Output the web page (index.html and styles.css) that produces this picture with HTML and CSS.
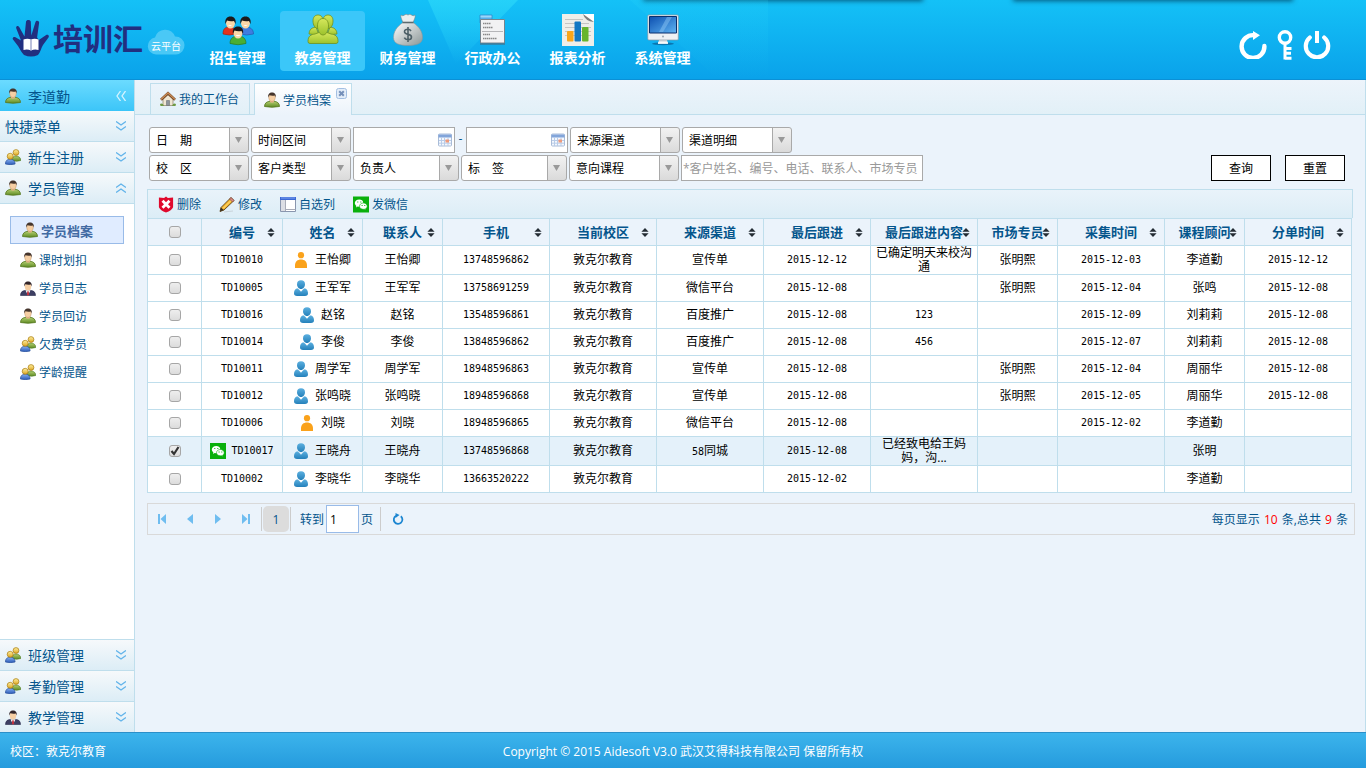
FILE: index.html
```html
<!DOCTYPE html>
<html lang="zh-CN">
<head>
    <meta charset="UTF-8">
    <title>培训汇云平台</title>
    <link rel="stylesheet" href="styles.css">
</head>
<body>
    <!-- 图标 -->
    <svg class="sprite" aria-hidden="true">
        <defs>
            <linearGradient id="gGreen" x1="0" y1="0" x2="0" y2="1"><stop offset="0" stop-color="#b5cf72"/><stop offset="1" stop-color="#5d8a22"/></linearGradient>
            <linearGradient id="gLime" x1="0" y1="0" x2="0" y2="1"><stop offset="0" stop-color="#d6e85c"/><stop offset="1" stop-color="#9cc22c"/></linearGradient>
            <linearGradient id="gGold" x1="0" y1="0" x2="0" y2="1"><stop offset="0" stop-color="#fff0a0"/><stop offset="1" stop-color="#dca520"/></linearGradient>
            <linearGradient id="gBlue" x1="0" y1="0" x2="0" y2="1"><stop offset="0" stop-color="#86b0f0"/><stop offset="1" stop-color="#2c5cb8"/></linearGradient>
            <linearGradient id="gPerson" x1="0" y1="0" x2="0" y2="1"><stop offset="0" stop-color="#5cb0e0"/><stop offset="1" stop-color="#2480ba"/></linearGradient>
            <linearGradient id="gBag" x1="0" y1="0" x2="1" y2="1"><stop offset="0" stop-color="#ffffff"/><stop offset="1" stop-color="#8b9696"/></linearGradient>
            <linearGradient id="gScreen" x1="0" y1="0" x2="1" y2="1"><stop offset="0" stop-color="#0d4fb0"/><stop offset="1" stop-color="#5fb4f2"/></linearGradient>
            <linearGradient id="gRay" x1="0" y1="0" x2="0" y2="1"><stop offset="0" stop-color="#30dcfa" stop-opacity=".6"/><stop offset="1" stop-color="#30dcfa" stop-opacity="0"/></linearGradient>
        </defs>
        <symbol id="i-user" viewBox="0 0 16 16">
            <path d="M.5 14.500C.5 11 3 9.500 6 9.300h4c3 .2 5.500 1.700 5.500 5.200q-7.500 1.500-15 0z" fill="url(#gGreen)" stroke="#56771f" stroke-width=".8"/>
            <path d="M6 8h4v2q-2 1.500-4 0z" fill="#e2b184"/>
            <ellipse cx="8" cy="5.500" rx="3.300" ry="4" fill="#f6cfa4" stroke="#b98a5c" stroke-width=".4"/>
            <path d="M4.200 5.500C3.800 2 5.500.5 8 .5s4.300 1.500 3.800 5l-.9-2q-2.900.6-5.600-.2z" fill="#45352c"/>
        </symbol>
        <symbol id="i-suit" viewBox="0 0 16 16">
            <path d="M.5 15.500c0-3.500 2-5 5.500-5.200h4c3.500.2 5.500 1.700 5.500 5.200z" fill="#3d3f63" stroke="#26284a" stroke-width=".6"/>
            <path d="M5.500 10.300h5L8 15.500z" fill="#fff"/>
            <path d="M7.300 11.300h1.400l.5 4H6.800z" fill="#c0303c"/>
            <ellipse cx="8" cy="6.500" rx="3.200" ry="3.900" fill="#f6cfa4"/>
            <path d="M4.300 6.500C3.900 3 5.500 1.500 8 1.500s4.200 1.500 3.700 5l-.9-2q-2.900.6-5.500-.2z" fill="#33262a"/>
        </symbol>
        <symbol id="i-group" viewBox="0 0 16 16">
            <path d="M7 11.500c0-3 1.500-4.500 4-4.500s4.800 1.500 4.800 4.500q-4 1.500-8.800 0z" fill="url(#gGreen)" stroke="#4c7a24" stroke-width=".6"/>
            <circle cx="11" cy="3.500" r="2.900" fill="url(#gGold)" stroke="#a87a10" stroke-width=".7"/>
            <path d="M.4 15c0-3.300 1.800-4.800 4.800-4.800s4.900 1.500 4.900 4.800q-4.800 1.300-9.700 0z" fill="url(#gBlue)" stroke="#28509c" stroke-width=".7"/>
            <circle cx="5.200" cy="7.300" r="3" fill="url(#gGold)" stroke="#a87a10" stroke-width=".7"/>
        </symbol>
        <symbol id="i-down" viewBox="0 0 10 10">
            <path d="M0 .5l5 3.500 5-3.500M0 5.500L5 9l5-3.500" fill="none" stroke="#63b4ea" stroke-width="1.400"/>
        </symbol>
        <symbol id="i-up" viewBox="0 0 10 10">
            <path d="M0 4.500L5 1l5 3.500M0 9.500L5 6l5 3.500" fill="none" stroke="#63b4ea" stroke-width="1.400"/>
        </symbol>
        <symbol id="i-left" viewBox="0 0 10 10">
            <path d="M4.500 0L1 5l3.500 5M9.500 0L6 5l3.500 5" fill="none" stroke="#d4f3ff" stroke-width="1.300"/>
        </symbol>
        <symbol id="i-home" viewBox="0 0 16 16">
            <path d="M3 8v6.500h10V8L8 3.500z" fill="#efe6d2" stroke="#8d7c62" stroke-width=".7"/>
            <path d="M6.500 9.500h3v5h-3z" fill="#8e949c" stroke="#5d646c" stroke-width=".5"/>
            <path d="M1 8.800L8 2.300l7 6.500" fill="none" stroke="#6d4021" stroke-width="2.600"/>
            <path d="M1 8.500L8 2l7 6.500" fill="none" stroke="#c98b55" stroke-width="1.300"/>
            <path d="M0 13q2.500-1.500 4 2H.5zM16 13q-2.500-1.500-4 2h3.500z" fill="#6e9a44"/>
        </symbol>
        <symbol id="i-close" viewBox="0 0 11 11">
            <rect x=".5" y=".5" width="10" height="10" rx="2" fill="#e3edf9" stroke="#a3bfe2"/>
            <path d="M3.200 3.200l4.600 4.600M7.800 3.200L3.200 7.800" stroke="#7590ba" stroke-width="2"/>
        </symbol>
        <symbol id="i-calendar" viewBox="0 0 14 14">
            <rect x=".5" y="1" width="13" height="12" rx="1" fill="#f4f8fe" stroke="#a9bcd8"/>
            <path d="M.5 1.500h13v3H.5z" fill="#82a5da"/>
            <path d="M3.500 4.500V13M6.500 4.500V13M10 4.500V13M1 7.500h12M1 10.200h12" stroke="#b9cce8"/>
            <path d="M7.500 6.500h3.500v3H7.500z" fill="#ee9a7c"/>
        </symbol>
        <symbol id="i-delete" viewBox="0 0 16 18">
            <path d="M8 .5L10 2l5.500-.3V12Q14 15.500 8 17.500 2 15.500.5 12V1.700L6 2z" fill="#e0092c"/>
            <path d="M4.300 5l7.400 7.500M11.700 5l-7.400 7.500" stroke="#fff" stroke-width="3"/>
        </symbol>
        <symbol id="i-edit" viewBox="0 0 16 16">
            <path d="M5 15.500l9-1" stroke="#c9d3da"/>
            <path d="M1 15l1-4L12 1l3 3L5 13.500z" fill="#f5b52c" stroke="#5a4018" stroke-width=".9"/>
            <path d="M4 12L13.500 2.500" stroke="#ffe48a" stroke-width="1"/>
            <path d="M1 15l1-4 2.800 2.500z" fill="#3b3226"/>
            <path d="M12 1l3 3-1.500 1.500-3-3z" fill="#df8a86" stroke="#6b3c3c" stroke-width=".6"/>
        </symbol>
        <symbol id="i-columns" viewBox="0 0 16 15">
            <path d="M.5.5h15v14H.5z" fill="#fff" stroke="#8996ae"/>
            <path d="M0 0h16v3H0z" fill="#3c69d6"/>
            <path d="M1 1h14" stroke="#8fb1f5" stroke-width=".8"/>
            <path d="M1 3h4.500v11H1z" fill="#dcdee4"/>
            <path d="M5.500 3v11M5.500 12.500h10" stroke="#a8acb8"/>
        </symbol>
        <symbol id="i-wechat" viewBox="0 0 16 16">
            <path d="M0 0h16v16H0z" fill="#09b00c"/>
            <path d="M6.200 3C3.700 3 1.800 4.600 1.800 6.600c0 1.200.6 2.100 1.600 2.800L3 10.900l1.700-.9q3 .6 4.800-1.200 1.500-3-.2-4.700Q8 3 6.200 3z" fill="#fff"/>
            <path d="M10.400 6.500c-2.200 0-3.900 1.400-3.900 3.200s1.700 3.100 3.900 3.100l1.200-.1 1.400.8-.4-1.300c.9-.6 1.600-1.500 1.600-2.500 0-1.800-1.700-3.200-3.800-3.200z" fill="#fff" stroke="#09b00c" stroke-width=".6"/>
            <path d="M4.300 5.500h1M7.300 5.500h1M8.600 9h1M11.300 9h1" stroke="#09b00c"/>
        </symbol>
        <symbol id="i-woman" viewBox="0 0 14 16">
            <circle cx="7" cy="3.200" r="3.100" fill="#faa21b"/>
            <path d="M1 16v-2.500C1 9.500 3.500 7.500 7 7.500s6 2 6 6V16z" fill="#faa21b"/>
        </symbol>
        <symbol id="i-man" viewBox="0 0 14 16">
            <path d="M7 .3c2.600 0 4 1.600 4 3.900S9.400 9 7 9 3 6.500 3 4.200 4.400.3 7 .3z" fill="url(#gPerson)"/>
            <path d="M3.300 8.300L5 9.500l2 2.200 2-2.200 1.700-1.200c2.500.7 3.300 2.700 3.300 5.200 0 1.600-1 2.500-3 2.500H3c-2 0-3-.9-3-2.500 0-2.500.8-4.500 3.300-5.200z" fill="url(#gPerson)"/>
        </symbol>
        <symbol id="i-sort" viewBox="0 0 8 10">
            <path d="M4 0l4 4.300H0zM4 10L0 5.700h8z" fill="#232b33"/>
        </symbol>
        <symbol id="p-first" viewBox="0 0 10 10"><path d="M1 0h2v10H1zM9 0v10L3.500 5z" fill="#6fbdf0"/></symbol>
        <symbol id="p-prev" viewBox="0 0 10 10"><path d="M8 0v10L2 5z" fill="#6fbdf0"/></symbol>
        <symbol id="p-next" viewBox="0 0 10 10"><path d="M2 0v10l6-5z" fill="#6fbdf0"/></symbol>
        <symbol id="p-last" viewBox="0 0 10 10"><path d="M7 0h2v10H7zM1 0v10l5.500-5z" fill="#6fbdf0"/></symbol>
        <symbol id="p-reload" viewBox="0 0 12 12">
            <path d="M8.800 3.200A4.300 4.300 0 1 1 4 2.800" fill="none" stroke="#1c86d1" stroke-width="1.800"/>
            <path d="M3.500 0v5L7.500 2z" fill="#1c86d1"/>
        </symbol>
    </svg>

    <header class="top">
        <svg class="rays" width="340" height="79" aria-hidden="true">
            <path d="M0 0h90L28 64z" fill="url(#gRay)"/>
            <path d="M202 0h138v79h-50z" fill="url(#gRay)" opacity=".25"/>
        </svg>
        <a class="logo" href="#">
            <svg class="logo-hand" viewBox="0 0 38 38">
                <path d="M12 36c-3-3-4-6-6-9L1 20.500c-1-1.500.5-3 2.500-2.200L9 21.500 4.300 9.500C3.500 7 6 6 7.200 8l5.300 9.500L14 2.800C14.200.4 18.600.4 18.800 2.800l.5 13.700L23.500 3c.8-2.200 4-1.300 3.600 1l-2 14.500 1.700 2.500 7-4.800c2-1.200 3.900.3 2.700 2.200L31 26c-2 3.500-2.500 7-5 10q-7 3-14 0z" fill="#212f80"/>
                <path d="M11.500 20.500q4-1.500 7.500 0 3.500-1.500 7.500 0V31q-4-1-7.500.5-3.500-1.500-7.500-.5z" fill="#fff"/>
                <path d="M19 20.500v11" stroke="#8d96c4" stroke-width="1.200"/>
            </svg>
            <span class="logo-name">培训汇</span>
            <span class="logo-cloud">
                <svg viewBox="0 0 38 26"><path d="M9 25.500a8.500 8.500 0 0 1-1-16.900A10.500 10.500 0 0 1 28 7.500a9 9 0 0 1 1 18z" fill="#4ac8f6"/></svg>
                <span>云平台</span>
            </span>
        </a>
        <nav class="nav">
            <a href="#">
                <svg viewBox="0 0 32 32">
                    <path d="M1 20c0-5 2-7 6-7s7 2 7 7q-7 2-13 0z" fill="#e2331c" stroke="#9c1c0c" stroke-width=".6"/>
                    <path d="M18 20c0-5 2-7 6-7s7.500 2 7.500 7q-7 2-13.500 0z" fill="#3f7de0" stroke="#2150a4" stroke-width=".6"/>
                    <ellipse cx="8.500" cy="9" rx="4.500" ry="5.500" fill="#fcd8a8"/><ellipse cx="23.500" cy="9" rx="4.500" ry="5.500" fill="#fcd8a8"/>
                    <path d="M3.500 10C2.500 5 5 2.500 8.500 2.500s6 2.500 5 7.500L12 7q-4 .8-7-.5zM18.500 10c-1-5 1.500-7.500 5-7.500s6 2.500 5 7.500L27 7q-4 .8-7-.5z" fill="#1c1a1a"/>
                    <path d="M8 29.500c0-5 3-7.500 8-7.500s8 2.500 8 7.500q-8 2.500-16 0z" fill="#4aae34" stroke="#277018" stroke-width=".6"/>
                    <ellipse cx="16" cy="19" rx="4.500" ry="5.500" fill="#fcd8a8"/>
                    <path d="M11 20c-1-5 1.500-7.500 5-7.500s6 2.500 5 7.500l-1.500-3q-4 .8-7-.5z" fill="#1c1a1a"/>
                    <path d="M13.500 21h5q-2.500 2.500-5 0zM6 11h4q-2 2-4 0zM21.500 11h4q-2 2-4 0z" fill="#fff"/>
                </svg>
                招生管理
            </a>
            <a href="#" class="active">
                <svg viewBox="0 0 32 32">
                    <g fill="url(#gLime)" stroke="#71921c" stroke-width=".8">
                        <path d="M2 20c0-4 2.500-6 5-6.500L9 13l3 8zM30 20c0-4-2.500-6-5-6.500L23 13l-3 8z"/>
                        <path d="M6 7c0-4 2-6 5-6s5 2 5 6-2 7.500-5 7.500S6 11 6 7zM16 7c0-4 2-6 5-6s5 2 5 6-2 7.500-5 7.500-5-3.500-5-7.500z"/>
                        <path d="M1 27.500C1 22 4 20.500 8 20l4-1.500h8l4 1.500c4 .5 7 2 7 7.500q0 2-2 2H3q-2 0-2-2z"/>
                        <path d="M10.500 12c0-5 2.300-7.500 5.500-7.500s5.500 2.500 5.500 7.500-2.500 9-5.500 9-5.500-4-5.500-9z"/>
                    </g>
                </svg>
                教务管理
            </a>
            <a href="#">
                <svg viewBox="0 0 32 32">
                    <path d="M11 8.500C9 4 8.500 2.500 9 1q2 1.500 3.500 0 1.500-1.500 3.500 0 2-1.500 3.500 0Q21 2.500 23 1c.5 1.500 0 3-2 7.500z" fill="#e9eeee" stroke="#7a8789" stroke-width=".6"/>
                    <path d="M11 8.500h10c6 4 9.500 9 9.500 15 0 6-5.500 8-14.500 8S1.500 29.500 1.500 23.500c0-6 3.500-11 9.500-15z" fill="url(#gBag)" stroke="#89979a" stroke-width=".6"/>
                    <path d="M10.500 8.500h11" stroke="#5b6a6e" stroke-width="1.600"/>
                    <path d="M19 17q-1-1.700-3.200-1.700c-2 0-3.300 1-3.300 2.500 0 3.500 7 1.600 7 5.200 0 1.600-1.400 2.700-3.500 2.700q-2.700 0-3.700-2M16 13v15" fill="none" stroke="#4d5f66" stroke-width="1.600"/>
                </svg>
                财务管理
            </a>
            <a href="#">
                <svg viewBox="0 0 32 32">
                    <path d="M3 1h12v8H3z" fill="#54aee9" stroke="#2d83c4" stroke-width=".7"/>
                    <path d="M3.500 1.500h11v2h-11z" fill="#9ad7fa"/>
                    <path d="M3.500 5.500h24V29h-24z" fill="#f2f2f3" stroke="#76848e"/>
                    <path d="M3 30h25" stroke="#4b6374"/>
                    <path d="M6 9.500h8M6 13.500h10M6 20.500h7M6 24.500h14" stroke="#888" stroke-width="1.600" stroke-dasharray="1.500 .5"/>
                    <path d="M5 17.500h21" stroke="#b5b5b8"/>
                </svg>
                行政办公
            </a>
            <a href="#">
                <svg viewBox="0 0 32 32">
                    <path d="M0 0h32v32H0z" fill="#efeee9"/>
                    <path d="M21 0h11v8z" fill="#fff"/><path d="M21 0q2 7 11 8z" fill="#7d7d7d"/>
                    <path d="M3 5.500h18M3 9.500h24M3 13.500h26M3 17.500h26M3 21.500h26" stroke="#c6c5c2"/>
                    <rect x="5" y="17" width="6.500" height="10.500" rx="1" fill="#f8a51b"/>
                    <rect x="12.500" y="7.500" width="6.500" height="20" rx="1" fill="#1278c4"/>
                    <rect x="20" y="13" width="6.500" height="14.500" rx="1" fill="#67b52d"/>
                </svg>
                报表分析
            </a>
            <a href="#">
                <svg viewBox="0 0 32 32">
                    <ellipse cx="16" cy="29.800" rx="11" ry="1.500" fill="#0a76b0"/>
                    <path d="M12 26h8l1 3.500H11z" fill="#dfe5ea"/>
                    <path d="M11 29h10" stroke="#fff" stroke-width="1.500"/>
                    <rect x=".8" y="1" width="30.500" height="25" rx="1" fill="#eef1f4" stroke="#8b98a5" stroke-width=".7"/>
                    <path d="M2.500 2.500h27v16.500h-27z" fill="url(#gScreen)" stroke="#0a2f6c"/>
                    <path d="M12 18L20 3h5l-9 15z" fill="#9bd2fa" opacity=".4"/>
                    <circle cx="16" cy="22.500" r="1" fill="#9aa7b2"/>
                </svg>
                系统管理
            </a>
        </nav>
        <div class="tools">
            <button type="button" class="tool" aria-label="刷新">
                <svg width="28" height="28" viewBox="0 0 28 28"><path d="M25.400 15A11.400 11.400 0 1 1 15 4.200" fill="none" stroke="#fff" stroke-width="4.400" stroke-linecap="round"/><path d="M14 0l7 4.200-7 4.800z" fill="#fff"/></svg>
            </button>
            <button type="button" class="tool" aria-label="修改密码">
                <svg width="16" height="30" viewBox="0 0 16 30"><circle cx="8" cy="7.500" r="5.700" fill="none" stroke="#fff" stroke-width="3.400"/><path d="M8 13v16.500M8 18.500h6.500M8 23.300h6M8 28.200h6.500" fill="none" stroke="#fff" stroke-width="3"/></svg>
            </button>
            <button type="button" class="tool" aria-label="退出">
                <svg width="28" height="28" viewBox="0 0 28 28"><path d="M6.800 6.500a11.200 11.200 0 1 0 14.400 0" fill="none" stroke="#fff" stroke-width="4.200" stroke-linecap="round"/><path d="M14 0v12" stroke="#fff" stroke-width="4"/></svg>
            </button>
        </div>
    </header>

    <div class="body">
        <!-- 左侧菜单 -->
        <aside class="side">
            <div class="side-user">
                <svg class="ico"><use href="#i-user"/></svg>李道勤
                <svg class="arrow"><use href="#i-left"/></svg>
            </div>
            <a class="side-head" href="#">快捷菜单<svg class="arrow"><use href="#i-down"/></svg></a>
            <a class="side-head" href="#"><svg class="ico"><use href="#i-group"/></svg>新生注册<svg class="arrow"><use href="#i-down"/></svg></a>
            <a class="side-head" href="#"><svg class="ico"><use href="#i-user"/></svg>学员管理<svg class="arrow"><use href="#i-up"/></svg></a>
            <ul class="side-list">
                <li><a href="#" class="active"><svg class="ico"><use href="#i-user"/></svg>学员档案</a></li>
                <li><a href="#"><svg class="ico"><use href="#i-user"/></svg>课时划扣</a></li>
                <li><a href="#"><svg class="ico"><use href="#i-suit"/></svg>学员日志</a></li>
                <li><a href="#"><svg class="ico"><use href="#i-user"/></svg>学员回访</a></li>
                <li><a href="#"><svg class="ico"><use href="#i-group"/></svg>欠费学员</a></li>
                <li><a href="#"><svg class="ico"><use href="#i-group"/></svg>学龄提醒</a></li>
            </ul>
            <a class="side-head" href="#"><svg class="ico"><use href="#i-group"/></svg>班级管理<svg class="arrow"><use href="#i-down"/></svg></a>
            <a class="side-head" href="#"><svg class="ico"><use href="#i-group"/></svg>考勤管理<svg class="arrow"><use href="#i-down"/></svg></a>
            <a class="side-head" href="#"><svg class="ico"><use href="#i-suit"/></svg>教学管理<svg class="arrow"><use href="#i-down"/></svg></a>
        </aside>

        <main class="main">
            <div class="tabs">
                <a class="tab" href="#"><svg class="ico"><use href="#i-home"/></svg>我的工作台</a>
                <a class="tab active" href="#"><svg class="ico"><use href="#i-user"/></svg>学员档案<svg class="tab-close"><use href="#i-close"/></svg></a>
            </div>

            <form class="filter">
                <div class="filter-fields">
                    <div class="filter-row">
                        <select aria-label="日期"><option>日　期</option></select>
                        <select aria-label="时间区间"><option>时间区间</option></select>
                        <span class="date"><input type="text" aria-label="开始日期"><svg><use href="#i-calendar"/></svg></span>
                        <span class="dash">-</span>
                        <span class="date"><input type="text" aria-label="结束日期"><svg><use href="#i-calendar"/></svg></span>
                        <select class="wide" aria-label="来源渠道"><option>来源渠道</option></select>
                        <select class="wide" aria-label="渠道明细"><option>渠道明细</option></select>
                    </div>
                    <div class="filter-row">
                        <select aria-label="校区"><option>校　区</option></select>
                        <select aria-label="客户类型"><option>客户类型</option></select>
                        <select class="mid" aria-label="负责人"><option>负责人</option></select>
                        <select class="mid" aria-label="标签"><option>标　签</option></select>
                        <select class="wide" aria-label="意向课程"><option>意向课程</option></select>
                        <input type="text" class="keyword" aria-label="关键字" placeholder="*客户姓名、编号、电话、联系人、市场专员">
                    </div>
                </div>
                <div class="filter-btns">
                    <button type="button">查询</button>
                    <button type="reset">重置</button>
                </div>
            </form>

            <div class="toolbar">
                <button type="button"><svg><use href="#i-delete"/></svg>删除</button>
                <button type="button"><svg><use href="#i-edit"/></svg>修改</button>
                <button type="button"><svg><use href="#i-columns"/></svg>自选列</button>
                <button type="button"><svg><use href="#i-wechat"/></svg>发微信</button>
            </div>

            <table class="grid">
                <colgroup>
                    <col class="c-check"><col class="c-id"><col class="c-s"><col class="c-s"><col class="c-m"><col class="c-m"><col class="c-m"><col class="c-m"><col class="c-m"><col class="c-s"><col class="c-m"><col class="c-s"><col class="c-m">
                </colgroup>
                <thead>
                    <tr>
                        <th><input type="checkbox" aria-label="全选"></th>
                        <th>编号<svg><use href="#i-sort"/></svg></th>
                        <th>姓名<svg><use href="#i-sort"/></svg></th>
                        <th>联系人<svg><use href="#i-sort"/></svg></th>
                        <th>手机<svg><use href="#i-sort"/></svg></th>
                        <th>当前校区<svg><use href="#i-sort"/></svg></th>
                        <th>来源渠道<svg><use href="#i-sort"/></svg></th>
                        <th>最后跟进<svg><use href="#i-sort"/></svg></th>
                        <th>最后跟进内容<svg><use href="#i-sort"/></svg></th>
                        <th>市场专员<svg><use href="#i-sort"/></svg></th>
                        <th>采集时间<svg><use href="#i-sort"/></svg></th>
                        <th>课程顾问<svg><use href="#i-sort"/></svg></th>
                        <th>分单时间<svg><use href="#i-sort"/></svg></th>
                    </tr>
                </thead>
                <tbody>
                    <tr class="tall">
                        <td><input type="checkbox" aria-label="TD10010"></td>
                        <td class="num">TD10010</td>
                        <td><span class="name"><svg><use href="#i-woman"/></svg>王怡卿</span></td>
                        <td>王怡卿</td><td class="num">13748596862</td><td>敦克尔教育</td><td>宣传单</td>
                        <td class="num">2015-12-12</td><td class="note">已确定明天来校沟通</td><td>张明熙</td>
                        <td class="num">2015-12-03</td><td>李道勤</td><td class="num">2015-12-12</td>
                    </tr>
                    <tr>
                        <td><input type="checkbox" aria-label="TD10005"></td>
                        <td class="num">TD10005</td>
                        <td><span class="name"><svg><use href="#i-man"/></svg>王军军</span></td>
                        <td>王军军</td><td class="num">13758691259</td><td>敦克尔教育</td><td>微信平台</td>
                        <td class="num">2015-12-08</td><td></td><td>张明熙</td>
                        <td class="num">2015-12-04</td><td>张鸣</td><td class="num">2015-12-08</td>
                    </tr>
                    <tr>
                        <td><input type="checkbox" aria-label="TD10016"></td>
                        <td class="num">TD10016</td>
                        <td><span class="name"><svg><use href="#i-man"/></svg>赵铭</span></td>
                        <td>赵铭</td><td class="num">13548596861</td><td>敦克尔教育</td><td>百度推广</td>
                        <td class="num">2015-12-08</td><td class="num">123</td><td></td>
                        <td class="num">2015-12-09</td><td>刘莉莉</td><td class="num">2015-12-08</td>
                    </tr>
                    <tr>
                        <td><input type="checkbox" aria-label="TD10014"></td>
                        <td class="num">TD10014</td>
                        <td><span class="name"><svg><use href="#i-man"/></svg>李俊</span></td>
                        <td>李俊</td><td class="num">13848596862</td><td>敦克尔教育</td><td>百度推广</td>
                        <td class="num">2015-12-08</td><td class="num">456</td><td></td>
                        <td class="num">2015-12-07</td><td>刘莉莉</td><td class="num">2015-12-08</td>
                    </tr>
                    <tr>
                        <td><input type="checkbox" aria-label="TD10011"></td>
                        <td class="num">TD10011</td>
                        <td><span class="name"><svg><use href="#i-man"/></svg>周学军</span></td>
                        <td>周学军</td><td class="num">18948596863</td><td>敦克尔教育</td><td>宣传单</td>
                        <td class="num">2015-12-08</td><td></td><td>张明熙</td>
                        <td class="num">2015-12-04</td><td>周丽华</td><td class="num">2015-12-08</td>
                    </tr>
                    <tr>
                        <td><input type="checkbox" aria-label="TD10012"></td>
                        <td class="num">TD10012</td>
                        <td><span class="name"><svg><use href="#i-man"/></svg>张鸣晓</span></td>
                        <td>张鸣晓</td><td class="num">18948596868</td><td>敦克尔教育</td><td>宣传单</td>
                        <td class="num">2015-12-08</td><td></td><td>张明熙</td>
                        <td class="num">2015-12-05</td><td>周丽华</td><td class="num">2015-12-08</td>
                    </tr>
                    <tr>
                        <td><input type="checkbox" aria-label="TD10006"></td>
                        <td class="num">TD10006</td>
                        <td><span class="name"><svg><use href="#i-woman"/></svg>刘晓</span></td>
                        <td>刘晓</td><td class="num">18948596865</td><td>敦克尔教育</td><td>微信平台</td>
                        <td class="num">2015-12-08</td><td></td><td></td>
                        <td class="num">2015-12-02</td><td>李道勤</td><td></td>
                    </tr>
                    <tr class="tall selected">
                        <td><input type="checkbox" aria-label="TD10017" checked></td>
                        <td class="num"><span class="name wx"><svg><use href="#i-wechat"/></svg>TD10017</span></td>
                        <td><span class="name"><svg><use href="#i-man"/></svg>王晓舟</span></td>
                        <td>王晓舟</td><td class="num">13748596868</td><td>敦克尔教育</td><td><span class="num">58</span>同城</td>
                        <td class="num">2015-12-08</td><td class="note">已经致电给王妈妈，沟...</td><td></td>
                        <td></td><td>张明</td><td></td>
                    </tr>
                    <tr>
                        <td><input type="checkbox" aria-label="TD10002"></td>
                        <td class="num">TD10002</td>
                        <td><span class="name"><svg><use href="#i-man"/></svg>李晓华</span></td>
                        <td>李晓华</td><td class="num">13663520222</td><td>敦克尔教育</td><td></td>
                        <td class="num">2015-12-02</td><td></td><td></td>
                        <td></td><td>李道勤</td><td></td>
                    </tr>
                </tbody>
            </table>

            <div class="pager">
                <button type="button" aria-label="首页"><svg><use href="#p-first"/></svg></button>
                <button type="button" aria-label="上一页"><svg><use href="#p-prev"/></svg></button>
                <button type="button" aria-label="下一页"><svg><use href="#p-next"/></svg></button>
                <button type="button" aria-label="末页"><svg><use href="#p-last"/></svg></button>
                <span class="sep"></span>
                <button type="button" class="page">1</button>
                <span class="sep"></span>
                <label class="goto">转到<input type="text" value="1">页</label>
                <span class="sep"></span>
                <button type="button" class="reload" aria-label="刷新"><svg><use href="#p-reload"/></svg></button>
                <span class="total">每页显示 <b>10</b> 条,总共 <b>9</b> 条</span>
            </div>
        </main>
    </div>

    <footer class="foot">
        <span class="foot-campus">校区：敦克尔教育</span>
        <span>Copyright © 2015 Aidesoft V3.0 武汉艾得科技有限公司 保留所有权</span>
    </footer>
</body>
</html>
```
FILE: styles.css
```css
* {
    box-sizing: border-box;
}

body {
    margin: 0;
    min-height: 100vh;
    display: flex;
    flex-direction: column;
    font-family: "Open Sans", "Noto Sans CJK SC", sans-serif;
    font-size: 12px;
    color: #000;
    background: #ebf3fb;
}

a {
    color: inherit;
    text-decoration: none;
}

button, input, select {
    font-family: inherit;
    font-size: 12px;
    margin: 0;
}

button {
    cursor: pointer;
}

.sprite {
    position: absolute;
    width: 0;
    height: 0;
}

.ico {
    width: 16px;
    height: 16px;
    flex: none;
}

/* 顶部 */
.top {
    position: relative;
    overflow: hidden;
    display: flex;
    height: 80px;
    border-bottom: 1px solid #0b90d6;
    background: linear-gradient(#14c1f7, #0aa2ea);
}

.top::before, .top::after {
    content: "";
    position: absolute;
    top: -4px;
    left: 644px;
    width: 278px;
    height: 4px;
    box-shadow: 0 0 5px 1px rgba(0, 60, 90, 0.8);
}

.top::after {
    left: 1014px;
}

.rays {
    position: absolute;
    left: 428px;
    top: 0;
}

.logo {
    display: flex;
    width: 195px;
    padding-left: 12px;
}

.logo-hand {
    width: 38px;
    height: 38px;
    margin: 19px 3px 0 0;
}

.logo-name {
    margin-top: 19px;
    font-size: 30px;
    line-height: 40px;
    font-weight: bold;
    color: #212f80;
}

.logo-cloud {
    position: relative;
    width: 38px;
    height: 26px;
    margin: 29px 0 0 4px;
}

.logo-cloud svg {
    display: block;
    width: 38px;
    height: 26px;
}

.logo-cloud span {
    position: absolute;
    left: 4px;
    top: 9px;
    font-size: 10px;
    line-height: 16px;
    white-space: nowrap;
    color: #fff;
}

.nav {
    position: relative;
    display: flex;
    padding-top: 11px;
}

.nav a {
    display: flex;
    flex-direction: column;
    align-items: center;
    width: 85px;
    height: 60px;
    padding-top: 3px;
    border-radius: 4px;
    font-size: 14px;
    line-height: 24px;
    font-weight: bold;
    color: #fff;
}

.nav a.active {
    background: #3bc7f9;
}

.nav svg {
    width: 32px;
    height: 32px;
    flex: none;
}

.tools {
    display: flex;
    align-items: center;
    gap: 10px;
    margin-left: auto;
    padding: 10px 35px 0 0;
}

.tool {
    display: flex;
    padding: 0;
    border: 0;
    background: none;
}

.body {
    flex: 1;
    display: flex;
}

/* 左侧菜单 */
.side {
    display: flex;
    flex-direction: column;
    width: 135px;
    flex: none;
    background: #fff;
    border-right: 1px solid #bfdeec;
}

.side-user, .side-head {
    display: flex;
    align-items: center;
    gap: 7px;
    height: 31px;
    padding: 0 8px 0 5px;
    font-size: 14px;
    color: #04558c;
    border-bottom: 1px solid #bfdeec;
    background: linear-gradient(#f6f9fb, #dcedf6);
}

.side-user {
    border-bottom: 0;
    background: linear-gradient(#6bdbff, #3cc5f8);
}

.side-list + .side-head {
    border-top: 1px solid #bfdeec;
    height: 32px;
}

.side-head:last-child {
    height: 30px;
    border-bottom: 0;
}

.arrow {
    width: 10px;
    height: 10px;
    margin-left: auto;
}

.side-list {
    flex: 1;
    margin: 0;
    padding: 12px 10px;
    list-style: none;
}

.side-list a {
    display: flex;
    align-items: center;
    gap: 3px;
    height: 28px;
    padding-left: 10px;
    color: #04558c;
}

.side-list a.active {
    margin-bottom: 2px;
    padding-left: 11px;
    font-size: 13px;
    font-weight: bold;
    color: #416aa3;
    background: #e0ecff;
    border: 1px solid #99bbe8;
}

/* 主体 */
.main {
    flex: 1;
    min-width: 0;
    border-right: 1px solid #bfdeec;
}

.tabs {
    display: flex;
    gap: 4px;
    height: 35px;
    padding: 3px 15px 0;
    border-bottom: 1px solid #bfdeec;
    background: linear-gradient(#edf4fb, #e2f0f7);
}

.tab {
    display: flex;
    align-items: center;
    gap: 3px;
    height: 32px;
    padding: 0 10px 0 9px;
    color: #04558c;
    border: 1px solid #bfdeec;
}

.tab.active {
    padding-right: 4px;
    border-bottom: 0;
    background: linear-gradient(#fff, #ebf3fb);
}

.tab-close {
    width: 11px;
    height: 11px;
    margin: -12px 0 0 2px;
}

.filter {
    display: flex;
    align-items: flex-end;
    justify-content: space-between;
    padding: 12px 20px 8px 14px;
}

.filter-row {
    display: flex;
    gap: 2px;
}

.filter-row + .filter-row {
    margin-top: 2px;
}

select {
    width: 100px;
    height: 26px;
    padding: 0 20px 0 6px;
    appearance: none;
    color: #000;
    border: 1px solid #a9a9a9;
    border-radius: 3px;
    background:
        url("data:image/svg+xml,%3Csvg xmlns='http://www.w3.org/2000/svg' width='19' height='24'%3E%3Cpath d='M0 0h1v24H0z' fill='%23a9a9a9'/%3E%3Cpath d='M6 9h7l-3.500 6z' fill='%23999'/%3E%3C/svg%3E") right top no-repeat,
        linear-gradient(#f2f2f2, #dadada) right top / 19px 24px no-repeat,
        #fff;
}

select.mid {
    width: 106px;
}

select.wide {
    width: 110px;
}

.date {
    position: relative;
}

.date input {
    display: block;
    width: 102px;
    height: 26px;
    padding: 0 22px 0 4px;
    border: 1px solid #a9a9a9;
}

.date svg {
    position: absolute;
    right: 3px;
    top: 6px;
    width: 14px;
    height: 14px;
}

.dash {
    width: 7px;
    line-height: 24px;
    text-align: center;
    color: #04558c;
}

.keyword {
    width: 242px;
    height: 26px;
    padding: 0 1px;
    border: 1px solid #a9a9a9;
}

.keyword::placeholder {
    color: #999;
}

.filter-btns {
    display: flex;
    gap: 14px;
}

.filter-btns button {
    width: 60px;
    height: 26px;
    padding: 0;
    color: #000;
    background: #fff;
    border: 1px solid #000;
}

.toolbar {
    display: flex;
    gap: 18px;
    height: 29px;
    margin: 0 12px;
    padding-left: 10px;
    border: 1px solid #bfdeec;
    border-bottom: 0;
    background: linear-gradient(#e9f3fa, #dcedf6);
}

.toolbar button {
    display: flex;
    align-items: center;
    gap: 3px;
    padding: 0;
    border: 0;
    background: none;
    color: #04558c;
}

.toolbar svg {
    width: 16px;
    height: 17px;
}

/* 列表 */
.grid {
    width: calc(100% - 25px);
    margin-left: 12px;
    table-layout: fixed;
    border-collapse: collapse;
    background: #fff;
}

.c-check { width: 54px; }
.c-id { width: 81px; }
.c-s { width: 80px; }
.c-m { width: 107px; }

.grid th, .grid td {
    height: 27px;
    padding: 0;
    text-align: center;
    line-height: 16px;
    border: 1px solid #bfdeec;
}

.grid th {
    position: relative;
    font-size: 13px;
    color: #04558c;
    background: #ebf3fb;
}

.grid th svg {
    position: absolute;
    right: 7px;
    top: 9px;
    width: 8px;
    height: 9px;
}

.grid .tall td {
    height: 29px;
}

.grid .selected {
    background: #e4f1fa;
}

.grid .num {
    font-family: "DejaVu Sans Mono", monospace;
    font-size: 10px;
}

.grid .note {
    padding: 0 4px;
    line-height: 14px;
}

.grid .name {
    display: flex;
    align-items: center;
    justify-content: center;
    gap: 7px;
}

.grid .name svg {
    width: 14px;
    height: 16px;
}

.grid .wx {
    gap: 5px;
}

.grid .wx svg {
    width: 16px;
}

input[type="checkbox"] {
    display: block;
    width: 12px;
    height: 12px;
    margin: 0 auto;
    appearance: none;
    border: 1px solid #a6a6a6;
    border-radius: 3px;
    background: linear-gradient(#eee, #dcdcdc);
}

input[type="checkbox"]:checked {
    background:
        url("data:image/svg+xml,%3Csvg xmlns='http://www.w3.org/2000/svg' width='10' height='10'%3E%3Cpath d='M1.500 5l2.500 3 4.500-7' fill='none' stroke='%23333' stroke-width='2.200'/%3E%3C/svg%3E") center no-repeat,
        linear-gradient(#eee, #dcdcdc);
}

/* 分页 */
.pager {
    display: flex;
    align-items: center;
    height: 32px;
    margin: 10px 10px 0 12px;
    color: #04558c;
    border: 1px solid #d9d9d9;
}

.pager button {
    display: flex;
    align-items: center;
    justify-content: center;
    width: 28px;
    height: 26px;
    padding: 0;
    border: 0;
    background: none;
}

.pager svg {
    width: 10px;
    height: 10px;
}

.pager .sep {
    width: 1px;
    height: 24px;
    margin: 0 1px;
    background: #ccc;
}

.pager .page {
    width: 26px;
    color: #04558c;
    border-radius: 5px;
    background: #dcdcdc;
}

.pager .reload {
    width: 31px;
}

.pager .reload svg {
    width: 12px;
    height: 12px;
}

.goto {
    display: flex;
    align-items: center;
    gap: 2px;
    padding: 0 6px 0 8px;
}

.goto input {
    width: 33px;
    height: 28px;
    padding: 0 3px;
    border: 1px solid #99bbe8;
}

.total {
    margin-left: auto;
    padding-right: 6px;
}

.total b {
    margin: 0 1px;
    font-weight: normal;
    color: #f00;
}

/* 底部 */
.foot {
    position: relative;
    display: flex;
    align-items: center;
    justify-content: center;
    height: 36px;
    color: #fff;
    border-top: 1px solid #2b8fc9;
    background: linear-gradient(#3cb4ec, #259bdd);
}

.foot-campus {
    position: absolute;
    left: 10px;
}
```
